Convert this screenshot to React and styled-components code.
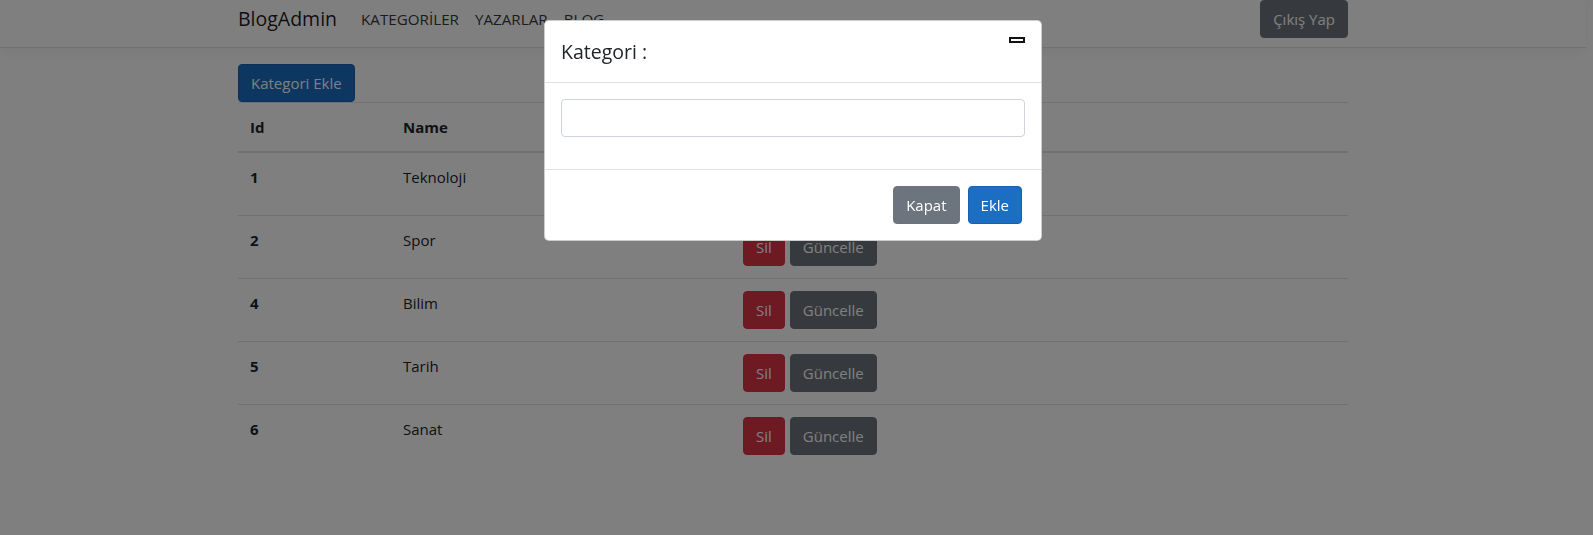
import React from 'react'
import styled, { createGlobalStyle, css } from 'styled-components'

const GlobalStyle = createGlobalStyle`
  html, body {
    margin: 0;
    padding: 0;
    background: #fff;
  }
  body {
    font-family: 'Open Sans', 'Noto Sans', sans-serif;
    font-size: 15px;
    line-height: 24px;
    color: #212529;
  }
  * {
    box-sizing: border-box;
  }
`

const Page = styled.div`
  padding-right: 7px;
`

const Container = styled.div`
  max-width: 1140px;
  margin: 0 auto;
  padding: 0 15px;
`

const Navbar = styled.header`
  margin: -9px 0 16px;
  padding: 8px 0;
  background: #fff;
  border-bottom: 1px solid #dee2e6;
  box-shadow: 0 4px 12px rgba(0, 0, 0, 0.05);
`

const NavInner = styled.div`
  display: flex;
  align-items: center;
`

const Brand = styled.a`
  padding: 5px 0;
  margin-right: 16px;
  font-size: 19.5px;
  line-height: 30px;
  color: rgba(0, 0, 0, 0.9);
  text-decoration: none;
`

const NavList = styled.nav`
  display: flex;
  flex-grow: 1;
`

const NavLink = styled.a`
  padding: 8px;
  font-size: 15.2px;
  color: #343a40;
  text-decoration: none;
`

const variants = {
  primary: css`
    background: #1b6ec2;
    border-color: #1861ac;
  `,
  secondary: css`
    background: #6c757d;
    border-color: #6c757d;
  `,
  danger: css`
    background: #dc3545;
    border-color: #dc3545;
  `,
}

const Button = styled.button`
  display: inline-block;
  height: 38px;
  padding: 6px 12px;
  font-family: inherit;
  font-size: 15px;
  font-weight: ${(p) => (p.$strong ? 500 : 400)};
  line-height: 24px;
  color: #fff;
  border: 1px solid transparent;
  border-radius: 4px;
  cursor: pointer;
  ${(p) => variants[p.$variant || 'primary']}
`

const Toolbar = styled.div`
  display: flex;
`

const Table = styled.table`
  width: 100%;
  border-collapse: collapse;
  margin-bottom: 16px;
`

const Th = styled.th`
  padding: 12px;
  text-align: left;
  vertical-align: top;
  font-weight: 700;
  border-top: 1px solid #dee2e6;
  width: ${(p) => p.$width || 'auto'};
`

const HeadTh = styled(Th)`
  border-bottom: 2px solid #dee2e6;
`

const Td = styled.td`
  padding: 12px;
  vertical-align: top;
  border-top: 1px solid #dee2e6;
`

const Actions = styled.div`
  display: flex;
  gap: 5px;
`

const Backdrop = styled.div`
  position: fixed;
  inset: 0;
  z-index: 1040;
  background: rgba(0, 0, 0, 0.5);
  padding-right: 7px;
`

const Dialog = styled.div`
  width: 498px;
  margin: 20px auto 0;
  background: #fff;
  border: 1px solid rgba(0, 0, 0, 0.2);
  border-radius: 5px;
`

const ModalHeader = styled.div`
  display: flex;
  align-items: flex-start;
  justify-content: space-between;
  padding: 16px;
  border-bottom: 1px solid #dee2e6;
`

const ModalTitle = styled.h5`
  margin: 0;
  font-size: 19.5px;
  font-weight: 500;
  line-height: 29px;
`

const CloseButton = styled.button`
  width: 16px;
  height: 6px;
  padding: 0;
  background: #fff;
  border: 2px solid #111;
  border-radius: 0;
`

const ModalBody = styled.div`
  padding: 16px;
`

const Input = styled.input`
  display: block;
  width: 100%;
  height: 38px;
  padding: 6px 12px;
  margin-bottom: 16px;
  font-family: inherit;
  font-size: 15px;
  color: #495057;
  border: 1px solid #ced4da;
  border-radius: 4px;
`

const ModalFooter = styled.div`
  display: flex;
  justify-content: flex-end;
  align-items: center;
  gap: 8px;
  padding: 16px 19px 16px 16px;
  border-top: 1px solid #dee2e6;
`

const categories = [
  { id: 1, name: 'Teknoloji' },
  { id: 2, name: 'Spor' },
  { id: 4, name: 'Bilim' },
  { id: 5, name: 'Tarih' },
  { id: 6, name: 'Sanat' },
]

export default function App() {
  return (
    <Page>
      <GlobalStyle />
      <Navbar>
        <Container>
          <NavInner>
            <Brand href="#">BlogAdmin</Brand>
            <NavList>
              <NavLink href="#">KATEGORİLER</NavLink>
              <NavLink href="#">YAZARLAR</NavLink>
              <NavLink href="#">BLOG</NavLink>
            </NavList>
            <Button $variant="secondary">Çıkış Yap</Button>
          </NavInner>
        </Container>
      </Navbar>
      <Container>
        <Toolbar>
          <Button>Kategori Ekle</Button>
        </Toolbar>
        <Table>
          <thead>
            <tr>
              <HeadTh $width="153px">Id</HeadTh>
              <HeadTh $width="340px">Name</HeadTh>
              <HeadTh />
            </tr>
          </thead>
          <tbody>
            {categories.map((c) => (
              <tr key={c.id}>
                <Th>{c.id}</Th>
                <Td>{c.name}</Td>
                <Td>
                  <Actions>
                    <Button $variant="danger">Sil</Button>
                    <Button $variant="secondary">Güncelle</Button>
                  </Actions>
                </Td>
              </tr>
            ))}
          </tbody>
        </Table>
      </Container>
      <Backdrop>
        <Dialog>
          <ModalHeader>
            <ModalTitle>Kategori :</ModalTitle>
            <CloseButton aria-label="Close" />
          </ModalHeader>
          <ModalBody>
            <Input />
          </ModalBody>
          <ModalFooter>
            <Button $variant="secondary" $strong>Kapat</Button>
            <Button $strong>Ekle</Button>
          </ModalFooter>
        </Dialog>
      </Backdrop>
    </Page>
  )
}
